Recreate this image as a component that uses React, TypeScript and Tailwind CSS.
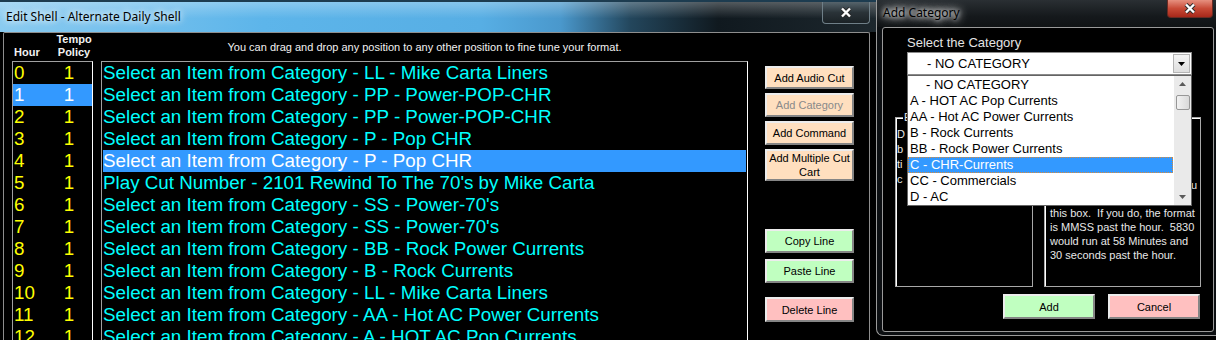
import React from 'react';

const hours = [0, 1, 2, 3, 4, 5, 6, 7, 8, 9, 10, 11, 12];

const formatLines = [
  'Select an Item from Category - LL - Mike Carta Liners',
  'Select an Item from Category - PP - Power-POP-CHR',
  'Select an Item from Category - PP - Power-POP-CHR',
  'Select an Item from Category - P - Pop CHR',
  'Select an Item from Category - P - Pop CHR',
  "Play Cut Number - 2101 Rewind To The 70's by Mike Carta",
  "Select an Item from Category - SS - Power-70's",
  "Select an Item from Category - SS - Power-70's",
  'Select an Item from Category - BB - Rock Power Currents',
  'Select an Item from Category - B - Rock Currents',
  'Select an Item from Category - LL - Mike Carta Liners',
  'Select an Item from Category - AA - Hot AC Power Currents',
  'Select an Item from Category - A - HOT AC Pop Currents',
];

const categories = [
  '- NO CATEGORY',
  'A - HOT AC Pop Currents',
  'AA - Hot AC Power Currents',
  'B - Rock Currents',
  'BB - Rock Power Currents',
  'C - CHR-Currents',
  'CC - Commercials',
  'D - AC',
];

// only the first letters show past the open dropdown
const leftHelp = ['D', 'b', 'ti', 'c'];

const rightHelp = [
  'this box.  If you do, the format',
  'is MMSS past the hour.  5830',
  'would run at 58 Minutes and',
  '30 seconds past the hour.',
];

const tones = {
  peach: 'bg-[#ffdfbf]',
  green: 'bg-[#c0ffc0]',
  pink: 'bg-[#ffc0c0]',
};

function Btn({
  label,
  tone,
  className = '',
  disabled = false,
}: {
  label: string;
  tone: keyof typeof tones;
  className?: string;
  disabled?: boolean;
}) {
  return (
    <div
      className={`flex shrink-0 items-center justify-center border-2 border-t-[#ececec] border-l-[#ececec] border-r-[#858585] border-b-[#858585] px-[2px] text-center text-[11px] leading-[14px] ${tones[tone]} ${disabled ? 'text-[#8a8a8a]' : 'text-black'} ${className}`}
    >
      {label}
    </div>
  );
}

function CloseX() {
  return (
    <svg width="12" height="11" viewBox="0 0 12 11">
      <path d="M2 1.5 L10 9.5 M10 1.5 L2 9.5" stroke="#2b2b2b" strokeWidth="4.2" />
      <path d="M2 1.5 L10 9.5 M10 1.5 L2 9.5" stroke="#ffffff" strokeWidth="2.4" />
    </svg>
  );
}

function Tri({ up = false, color = '#000' }: { up?: boolean; color?: string }) {
  return (
    <svg width="7" height="4" viewBox="0 0 7 4">
      <path d={up ? 'M0 4 L3.5 0 L7 4 Z' : 'M0 0 L7 0 L3.5 4 Z'} fill={color} />
    </svg>
  );
}

function EditShell() {
  return (
    <div className="flex h-[340px] w-[876px] shrink-0 flex-col bg-black">
      <div className="flex h-[32px] shrink-0 items-start justify-between border-t-[2px] border-[#1d3c50] bg-[linear-gradient(180deg,rgba(255,255,255,0.28),rgba(255,255,255,0)_55%),linear-gradient(90deg,#8acbf0_0%,#5db5ea_30%,#57aee4_55%,#4a98cc_64%,#23465c_72%,#10191f_82%,#1d272d_100%)]">
        <div className="pl-[6px] pt-[7px] font-['Noto_Sans',sans-serif] text-[12px] leading-[16px] text-black [text-shadow:0_0_6px_#ffffff,0_0_10px_#ffffff]">
          Edit Shell - Alternate Daily Shell
        </div>
        <div className="mr-[6px] flex h-[22px] w-[48px] items-center justify-center rounded-b-[4px] border border-t-0 border-[#6f7f88] bg-[linear-gradient(180deg,#56646c,#2a3338_50%,#1b2226)]">
          <CloseX />
        </div>
      </div>

      <div className="ml-[3px] mr-[6px] min-h-0 flex-1 overflow-hidden rounded-t-[2px] border-l border-r border-t border-[#8e8e8e] pl-[8px]">
        <div className="flex h-[28px] text-[11px] leading-[13px] text-[#f2f2f2]">
          <div className="flex w-[81px]">
            <div className="w-[43px] pl-[2px] pt-[13px] font-bold">Hour</div>
            <div className="w-[38px] text-center font-bold">
              Tempo
              <br />
              Policy
            </div>
          </div>
          <div className="ml-[8px] w-[647px] pt-[7px] text-center leading-[14px]">
            You can drag and drop any position to any other position to fine tune your format.
          </div>
        </div>

        <div className="flex">
          <div className="h-[290px] w-[81px] shrink-0 overflow-hidden border border-[#a0a0a0] border-r-white border-b-white text-[18.8px] leading-[22px] text-[#ffff00]">
            {hours.map((h) => (
              <div key={h} className={`flex h-[22px] ${h === 1 ? 'bg-[#3399ff] text-white' : ''}`}>
                <span className="w-[46px] pl-[1px]">{h}</span>
                <span className="w-[20px] text-center">1</span>
              </div>
            ))}
          </div>

          <div className="ml-[8px] h-[290px] w-[647px] shrink-0 overflow-hidden border border-[#a0a0a0] border-r-white border-b-white text-[18.8px] leading-[22px] text-[#00ffff]">
            {formatLines.map((line, i) => (
              <div
                key={i}
                className={`mx-[1px] h-[22px] whitespace-nowrap ${i === 4 ? 'bg-[#3399ff] text-white' : ''}`}
              >
                {line}
              </div>
            ))}
          </div>

          <div className="ml-[17px] flex w-[89px] shrink-0 flex-col">
            <Btn label="Add Audio Cut" tone="peach" className="mt-[5px] h-[23px]" />
            <Btn label="Add Category" tone="peach" disabled className="mt-[4px] h-[24px]" />
            <Btn label="Add Command" tone="peach" className="mt-[4px] h-[24px]" />
            <Btn label="Add Multiple Cut Cart" tone="peach" className="mt-[4px] h-[32px]" />
            <Btn label="Copy Line" tone="green" className="mt-[48px] h-[24px]" />
            <Btn label="Paste Line" tone="green" className="mt-[6px] h-[24px]" />
            <Btn label="Delete Line" tone="pink" className="mt-[14px] h-[25px]" />
          </div>
        </div>
      </div>
    </div>
  );
}

function AddCategory() {
  return (
    <div className="flex h-[336px] flex-1 flex-col rounded-bl-[7px] border-b border-l border-[#9a9a9a] bg-[#0c0f12]">
      <div className="flex h-[27px] shrink-0 items-start justify-between bg-[linear-gradient(180deg,#2a2f33,#15191c_60%,#101315)]">
        <div className="pl-[6px] pt-[5px] font-['Noto_Sans',sans-serif] text-[12px] leading-[16px] text-black [text-shadow:0_0_5px_#ffffff,0_0_8px_#ffffff,0_0_12px_#dddddd]">
          Add Category
        </div>
        <div className="mr-[3px] flex h-[18px] w-[46px] items-center justify-center rounded-b-[4px] border border-t-0 border-[#6b2a22] bg-[linear-gradient(180deg,#e6907f,#c84a36_50%,#a8281a)]">
          <CloseX />
        </div>
      </div>

      <div className="relative mb-[3px] ml-[5px] mr-[2px] min-h-0 flex-1 rounded-[3px] border border-[#9a9a9a] bg-black">
        <div className="ml-[24px] pt-[7px] text-[13px] leading-[16px] text-[#e4e4e4]">Select the Category</div>
        <div className="relative ml-[24px] mt-[1px] h-[23px] w-[285px] border border-[#8a8a8a] bg-white pl-[19px] text-[13px] leading-[21px] text-black">
          - NO CATEGORY
          <div className="absolute right-[1px] top-[1px] flex h-[19px] w-[17px] items-center justify-center border border-[#b4b4b4] bg-[linear-gradient(180deg,#f4f4f4,#dedede)]">
            <Tri />
          </div>
        </div>

        <div className="ml-[12px] mt-[42px] flex gap-[11px] text-[11px] text-[#e8e8e8]">
          <div className="relative h-[170px] w-[138px] border border-[#a8a8a8] pl-[1px] pt-[9px] leading-[15px] shadow-[inset_1px_1px_0_#ffffff]">
            <span className="absolute -top-[8px] left-[7px] w-[5px] overflow-hidden bg-black pl-[1px] leading-[14px]">E</span>
            <div className="w-[10px] overflow-hidden">
              {leftHelp.map((t) => (
                <div key={t} className="whitespace-nowrap">
                  {t}
                </div>
              ))}
            </div>
          </div>
          <div className="relative flex h-[170px] w-[157px] flex-col border border-[#a8a8a8] pl-[5px] pt-[60px] leading-[14px] shadow-[inset_1px_1px_0_#ffffff]">
            <div className="h-[28px] pl-[141px]">u</div>
            {rightHelp.map((t) => (
              <div key={t} className="whitespace-pre">
                {t}
              </div>
            ))}
          </div>
        </div>

        <div className="mt-[7px] flex gap-[13px] pl-[120px]">
          <Btn label="Add" tone="green" className="h-[25px] w-[92px]" />
          <Btn label="Cancel" tone="pink" className="h-[25px] w-[92px]" />
        </div>

        <div className="absolute left-[24px] top-[47px] h-[131px] w-[285px] border border-[#646464] bg-white pt-[1px] text-[13px] leading-[16px] text-black">
          {categories.map((c, i) => (
            <div
              key={c}
              className={`mr-[18px] h-[16px] whitespace-nowrap ${i === 0 ? 'pl-[18px]' : 'pl-[2px]'} ${i === 5 ? 'bg-[#3399ff] text-white outline-1 outline-dotted outline-[#d98a3a] -outline-offset-1' : ''}`}
            >
              {c}
            </div>
          ))}
          <div className="absolute bottom-0 right-0 top-0 flex w-[17px] flex-col items-center bg-[#eaeaea]">
            <div className="flex h-[16px] items-center">
              <Tri up color="#5a5a5a" />
            </div>
            <div className="mt-[3px] h-[15px] w-[14px] rounded-[2px] border border-[#979797] bg-[linear-gradient(90deg,#f2f2f2,#d9d9d9)]" />
            <div className="flex-1" />
            <div className="flex h-[16px] items-center">
              <Tri color="#5a5a5a" />
            </div>
          </div>
        </div>
      </div>
    </div>
  );
}

export default function App() {
  return (
    <div className="flex h-[340px] w-[1216px] overflow-hidden bg-black font-['Liberation_Sans',Arial,sans-serif]">
      <EditShell />
      <AddCategory />
    </div>
  );
}
